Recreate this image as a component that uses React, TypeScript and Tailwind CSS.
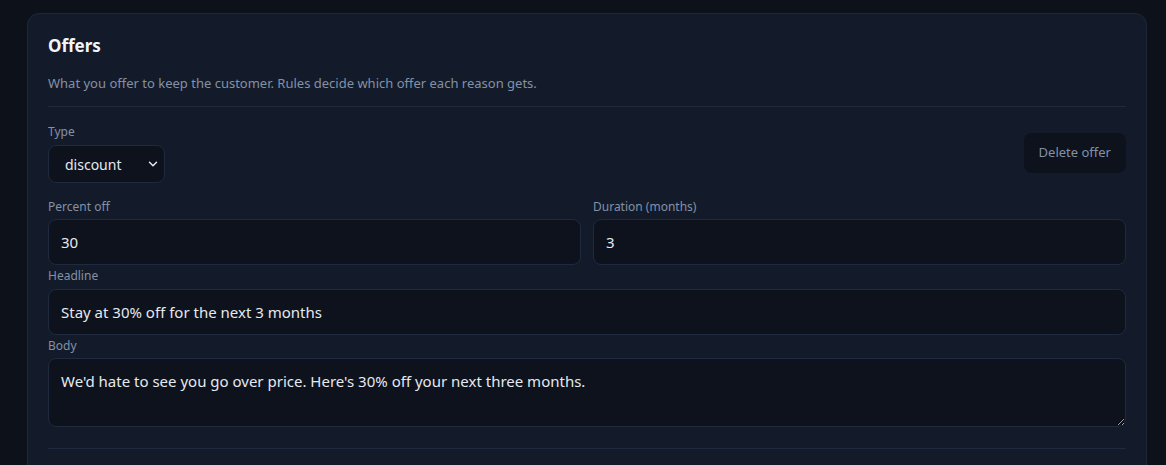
import { ChevronDown } from "lucide-react";

const label = "block text-[12px] leading-4 text-[#8391a7]";
const field =
  "w-full rounded-lg border border-[#1f2a3e] bg-[#0d121d] px-3 text-[15px] text-[#e6e9ef] outline-none";

export default function App() {
  return (
    <div
      className="min-h-[465px] bg-[#0c111a] pl-[27px] pr-[19px] pt-[13px] [color-scheme:dark]"
      style={{ fontFamily: '"Noto Sans", "Open Sans", sans-serif' }}
    >
      <section className="rounded-xl border border-[#1e283a] bg-[#131b2a] px-5 pt-5 pb-8">
        <h2 className="text-[17px] font-bold leading-6 text-[#f3f5f8]">Offers</h2>
        <p className="mt-[15px] text-[13px] leading-5 text-[#8391a7]">
          What you offer to keep the customer. Rules decide which offer each reason gets.
        </p>
        <div className="mt-[13px] border-t border-[#1f2a3e]" />

        <div className="mt-[17px] flex items-start justify-between">
          <div>
            <label className={label}>Type</label>
            <div className="relative mt-[5px] w-[117px]">
              <select className="h-[38px] w-full appearance-none rounded-lg border border-[#1f2a3e] bg-[#0d121d] pl-4 text-[14px] text-[#e6e9ef] outline-none">
                <option>discount</option>
              </select>
              <ChevronDown
                size={14}
                strokeWidth={2.5}
                className="pointer-events-none absolute right-[5px] top-1/2 -translate-y-1/2 text-[#e6e9ef]"
              />
            </div>
          </div>
          <button className="mt-[9px] h-10 rounded-lg bg-[#0d121d] px-[15px] text-[13px] text-[#8391a7]">
            Delete offer
          </button>
        </div>

        <div className="mt-4 grid grid-cols-2 gap-3">
          <div>
            <label className={label}>Percent off</label>
            <input className={`${field} mt-1 h-[46px]`} defaultValue="30" />
          </div>
          <div>
            <label className={label}>Duration (months)</label>
            <input className={`${field} mt-1 h-[46px]`} defaultValue="3" />
          </div>
        </div>

        <div className="mt-[3px]">
          <label className={label}>Headline</label>
          <input
            className={`${field} mt-[5px] h-[46px]`}
            defaultValue="Stay at 30% off for the next 3 months"
          />
        </div>

        <div className="mt-[3px]">
          <label className={label}>Body</label>
          <textarea
            className={`${field} mt-1 block h-[69px] pt-[10px] pb-2 leading-6`}
            defaultValue="We'd hate to see you go over price. Here's 30% off your next three months."
          />
        </div>

        <div className="mt-[21px] border-t border-[#1f2a3e]" />
      </section>
    </div>
  );
}
